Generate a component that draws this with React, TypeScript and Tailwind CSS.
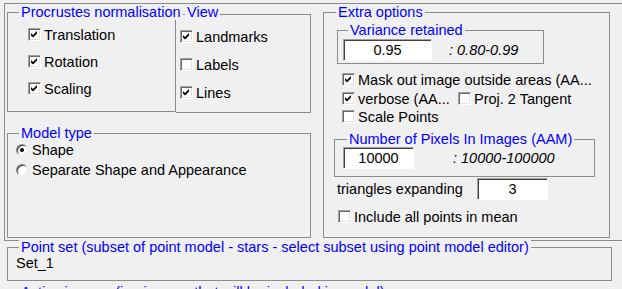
import React from "react";

const LINE = "border-[#8c8c8c]";

function Check({ on }: { on?: boolean }) {
  return (
    <span className="relative inline-flex w-[13px] h-[13px] shrink-0 bg-white border border-t-[#a0a0a0] border-l-[#a0a0a0] border-b-white border-r-white shadow-[inset_1px_1px_0_#696969,inset_-1px_-1px_0_#e3e3e3]">
      {on && (
        <svg width="11" height="11" viewBox="0 0 11 11" className="absolute left-0 top-0">
          <path d="M2 4 L4 6 L8 2 L8 4.5 L4 8.5 L2 6.5 Z" fill="#000" />
        </svg>
      )}
    </span>
  );
}

function Radio({ on }: { on?: boolean }) {
  return (
    <span className="relative inline-flex items-center justify-center w-[12px] h-[12px] shrink-0 rounded-full bg-white border border-t-[#808080] border-l-[#808080] border-b-[#e8e8e8] border-r-[#e8e8e8] shadow-[inset_1px_1px_0_#404040]">
      {on && <span className="w-[4px] h-[4px] rounded-full bg-black" />}
    </span>
  );
}

function Edit({ value, w }: { value: string; w: string }) {
  return (
    <span
      className={`inline-flex items-center justify-center h-[22px] ${w} bg-white border border-t-[#a0a0a0] border-l-[#a0a0a0] border-b-white border-r-white shadow-[inset_1px_1px_0_#404040]`}
    >
      {value}
    </span>
  );
}

function Legend({ text, cls }: { text: string; cls: string }) {
  return (
    <span className={`absolute z-10 px-[2px] bg-[#f0f0f0] text-[#0000ff] whitespace-nowrap leading-[16px] ${cls}`}>
      {text}
    </span>
  );
}

function CheckRow({ on, label, gap = "ml-[3px]" }: { on?: boolean; label: string; gap?: string }) {
  return (
    <div className="flex items-center h-[13px]">
      <Check on={on} />
      <span className={`${gap} whitespace-nowrap`}>{label}</span>
    </div>
  );
}

export default function App() {
  return (
    <div className="w-[622px] h-[289px] overflow-hidden bg-[#f0f0f0] text-black text-[14.5px] leading-[16px] font-['Liberation_Sans',Arial,sans-serif]">
      {/* outer frame */}
      <div className={`ml-[4px] mt-[3px] h-[238px] w-[700px] border-l border-t border-b ${LINE} flex pl-[2px] pt-[8px]`}>
        {/* left column */}
        <div className="flex flex-col w-[304px]">
          <div className="flex">
            <div className={`relative w-[169px] h-[100px] border ${LINE} pl-[20px] pt-[15px] flex flex-col gap-[14px]`}>
              <Legend text="Procrustes normalisation" cls="left-[11px] top-[-9px]" />
              <CheckRow on label="Translation" />
              <CheckRow on label="Rotation" />
              <CheckRow on label="Scaling" />
            </div>
            <div className={`relative mt-[2px] w-[135px] h-[99px] border border-l-0 ${LINE} pl-[4px] pt-[15px] flex flex-col gap-[15px]`}>
              <Legend text="View" cls="left-[9px] top-[-11px]" />
              <CheckRow on label="Landmarks" />
              <CheckRow label="Labels" />
              <CheckRow on label="Lines" />
            </div>
          </div>
          <div className={`relative mt-[20px] w-[304px] h-[105px] border ${LINE} pl-[8px] pt-[8px] flex flex-col gap-[4px]`}>
            <Legend text="Model type" cls="left-[11px] top-[-9px]" />
            <div className="flex items-center h-[16px]">
              <Radio on />
              <span className="ml-[4px]">Shape</span>
            </div>
            <div className="flex items-center h-[16px]">
              <Radio />
              <span className="ml-[4px] whitespace-nowrap">Separate Shape and Appearance</span>
            </div>
          </div>
        </div>

        {/* right column */}
        <div className={`relative ml-[12px] w-[287px] h-[226px] border ${LINE} flex flex-col`}>
          <Legend text="Extra options" cls="left-[12px] top-[-9px]" />
          <div className={`relative ml-[13px] mt-[17px] w-[207px] h-[34px] border ${LINE} pl-[5px] pt-[5px] flex items-center self-start`}>
            <Legend text="Variance retained" cls="left-[10px] top-[-9px]" />
            <div className="flex items-center">
              <Edit value="0.95" w="w-[89px]" />
              <span className="ml-[17px] italic">: 0.80-0.99</span>
            </div>
          </div>
          <div className="ml-[18px] mt-[9px]">
            <CheckRow on label="Mask out image outside areas (AA..." />
          </div>
          <div className="ml-[18px] mt-[6px] flex items-center h-[13px]">
            <Check on />
            <span className="ml-[3px] w-[100px] whitespace-nowrap">verbose (AA...</span>
            <Check />
            <span className="ml-[3px] whitespace-nowrap">Proj. 2 Tangent</span>
          </div>
          <div className="ml-[18px] mt-[5px]">
            <CheckRow label="Scale Points" />
          </div>
          <div className={`relative ml-[10px] mt-[16px] w-[261px] h-[38px] border ${LINE} pl-[8px] pt-[7px] flex self-start`}>
            <Legend text="Number of Pixels In Images (AAM)" cls="left-[12px] top-[-9px]" />
            <div className="flex items-center h-[22px]">
              <Edit value="10000" w="w-[71px]" />
              <span className="ml-[39px] italic">: 10000-100000</span>
            </div>
          </div>
          <div className="ml-[13px] mt-[1px] flex items-center">
            <span className="w-[140px] whitespace-nowrap">triangles expanding</span>
            <Edit value="3" w="w-[71px]" />
          </div>
          <div className="ml-[14px] mt-[10px]">
            <CheckRow label="Include all points in mean" />
          </div>
        </div>
      </div>

      {/* point set */}
      <div className={`relative ml-[7px] mt-[6px] w-[605px] h-[34px] border ${LINE} pl-[8px] pt-[7px]`}>
        <Legend text="Point set (subset of point model - stars - select subset using point model editor)" cls="left-[11px] top-[-9px]" />
        <span>Set_1</span>
      </div>
      <div className={`relative ml-[7px] mt-[11px] w-[605px] h-[40px] border ${LINE}`}>
        <Legend text="Active images (i.e. images that will be included in model)" cls="left-[11px] top-[-9px]" />
      </div>
    </div>
  );
}
